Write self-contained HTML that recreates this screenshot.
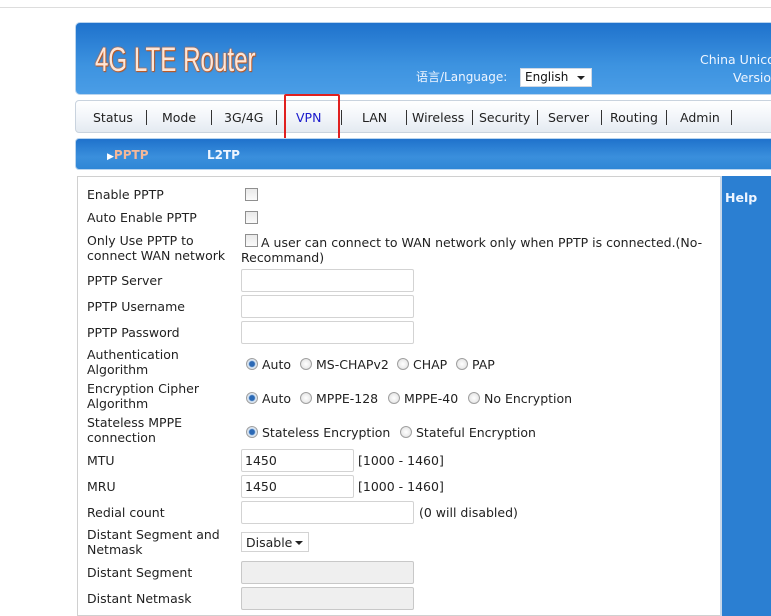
<!DOCTYPE html>
<html><head><meta charset="utf-8">
<style>
*{margin:0;padding:0;box-sizing:border-box}
body{width:771px;height:607px;overflow:hidden;background:#fff;position:relative;font-family:"DejaVu Sans","Liberation Sans","Noto Sans CJK SC",sans-serif;font-size:12px;color:#222}
.a{position:absolute;white-space:nowrap}
#topline{left:0;top:7px;width:771px;height:1px;background:#ddd}
#hdr{left:75px;top:22px;width:700px;height:73px;border-radius:5px;background:linear-gradient(#1f72cc,#3d93e0 60%,#4a9de6);border:1px solid #b9d4ee}
#logo{left:95px;top:41px;font-family:"Liberation Sans",sans-serif;font-size:34px;color:#fde6d8;transform:scaleX(0.71);transform-origin:left;text-shadow:0 0 2px #d9601e,0 0 2px #d9601e,1px 1px 1px #b04a10}
#lang{left:416px;top:68px;color:#eef5ff;font-size:12px}
#sel{left:520px;top:68px;width:72px;height:19px;background:#fff;border:1px solid #cfd8e4;font-size:12px;padding:1px 4px;color:#111}
#sel:after{content:"";position:absolute;right:6px;top:7px;border:4px solid transparent;border-top:4px solid #222}
#cu{left:700px;top:52px;color:#eef5ff;font-size:12.5px}
#ver{left:733px;top:70px;color:#eef5ff;font-size:12.5px}
#nav{left:75px;top:100px;width:700px;height:33px;border:1px solid #c9d3de;border-radius:4px;background:linear-gradient(#fff,#f3f6fa 50%,#e4eaf1)}
.n{top:110px;font-size:12.5px;color:#222}
.sep{top:110px;width:1px;height:15px;background:#333}
#vpnbox{left:284px;top:94px;width:56px;height:47px;border:2px solid #e02020;border-radius:2px}
#sub{left:75px;top:138px;width:700px;height:32px;border-radius:4px;background:linear-gradient(#1f72cc,#3a8fdc 60%,#2f86d6);border:1px solid #b9d4ee}
#content{left:77px;top:176px;width:644px;height:440px;border:1px solid #d0d0d0;border-right:none}
#help{left:720px;top:176px;width:51px;height:440px;background:#2b7fd2;border-left:2px solid #c8d8ea}
.l{left:87px;font-size:12.5px;line-height:15px}
.cb{width:13px;height:13px;border:1px solid #8f8f8f;background:linear-gradient(#e9e9e9,#fafafa)}
.in{left:241px;width:173px;height:23px;border:1px solid #d3d3d3;border-radius:2px;background:#fff;font-size:12.5px;padding:3px 3px}
.sm{width:113px}
.dis{background:#efefef;border-color:#c8c8c8}
.r{width:12px;height:12px;border-radius:50%;border:1px solid #a0a0a0;background:radial-gradient(#fff,#ddd)}
.r.on{background:radial-gradient(circle,#2b69b5 0,#2b69b5 2.5px,#cfe0f2 3.5px,#eee 6px)}
.t{font-size:12.5px}
</style></head><body>
<div class="a" id="topline"></div>
<div class="a" id="hdr"></div>
<div class="a" id="logo">4G LTE Router</div>
<div class="a" id="lang">语言/Language:</div>
<div class="a" id="sel">English</div>
<div class="a" id="cu">China Unicom</div>
<div class="a" id="ver">Version</div>

<div class="a" id="nav"></div>
<div class="a n" style="left:93px">Status</div>
<div class="a sep" style="left:146px"></div>
<div class="a n" style="left:162px">Mode</div>
<div class="a sep" style="left:211px"></div>
<div class="a n" style="left:224px">3G/4G</div>
<div class="a sep" style="left:276px"></div>
<div class="a n" style="left:296px;color:#1a1acc">VPN</div>
<div class="a sep" style="left:341px"></div>
<div class="a n" style="left:362px">LAN</div>
<div class="a sep" style="left:406px"></div>
<div class="a n" style="left:412px">Wireless</div>
<div class="a sep" style="left:472px"></div>
<div class="a n" style="left:479px">Security</div>
<div class="a sep" style="left:537px"></div>
<div class="a n" style="left:548px">Server</div>
<div class="a sep" style="left:601px"></div>
<div class="a n" style="left:610px">Routing</div>
<div class="a sep" style="left:666px"></div>
<div class="a n" style="left:680px">Admin</div>
<div class="a sep" style="left:731px"></div>
<div class="a" id="vpnbox"></div>

<div class="a" id="sub"></div>
<div class="a" style="left:107px;top:148px;font-weight:bold;color:#f4b89a;font-size:12px"><span style="color:#fff;font-size:9px">▶</span>PPTP</div>
<div class="a" style="left:207px;top:148px;font-weight:bold;color:#eef5ff;font-size:12px">L2TP</div>

<div class="a" id="content"></div>
<div class="a" id="help"></div>
<div class="a" style="left:725px;top:190px;font-weight:bold;color:#eef5ff;font-size:12.5px">Help</div>

<div class="a l" style="top:187px">Enable PPTP</div>
<div class="a cb" style="left:245px;top:188px"></div>
<div class="a l" style="top:210px">Auto Enable PPTP</div>
<div class="a cb" style="left:245px;top:211px"></div>
<div class="a l" style="top:233px">Only Use PPTP to<br>connect WAN network</div>
<div class="a cb" style="left:245px;top:234px"></div>
<div class="a t" style="left:261px;top:235px">A user can connect to WAN network only when PPTP is connected.(No-</div>
<div class="a t" style="left:241px;top:250px">Recommand)</div>

<div class="a l" style="top:273px">PPTP Server</div>
<div class="a in" style="top:269px"></div>
<div class="a l" style="top:299px">PPTP Username</div>
<div class="a in" style="top:295px"></div>
<div class="a l" style="top:325px">PPTP Password</div>
<div class="a in" style="top:321px"></div>

<div class="a l" style="top:347px">Authentication<br>Algorithm</div>
<div class="a r on" style="left:246px;top:358px"></div><div class="a t" style="left:262px;top:357px">Auto</div>
<div class="a r" style="left:300px;top:358px"></div><div class="a t" style="left:316px;top:357px">MS-CHAPv2</div>
<div class="a r" style="left:397px;top:358px"></div><div class="a t" style="left:413px;top:357px">CHAP</div>
<div class="a r" style="left:456px;top:358px"></div><div class="a t" style="left:472px;top:357px">PAP</div>

<div class="a l" style="top:381px">Encryption Cipher<br>Algorithm</div>
<div class="a r on" style="left:246px;top:392px"></div><div class="a t" style="left:262px;top:391px">Auto</div>
<div class="a r" style="left:300px;top:392px"></div><div class="a t" style="left:316px;top:391px">MPPE-128</div>
<div class="a r" style="left:388px;top:392px"></div><div class="a t" style="left:404px;top:391px">MPPE-40</div>
<div class="a r" style="left:468px;top:392px"></div><div class="a t" style="left:484px;top:391px">No Encryption</div>

<div class="a l" style="top:415px">Stateless MPPE<br>connection</div>
<div class="a r on" style="left:246px;top:426px"></div><div class="a t" style="left:262px;top:425px">Stateless Encryption</div>
<div class="a r" style="left:400px;top:426px"></div><div class="a t" style="left:416px;top:425px">Stateful Encryption</div>

<div class="a l" style="top:453px">MTU</div>
<div class="a in sm" style="top:449px">1450</div>
<div class="a t" style="left:358px;top:453px">[1000 - 1460]</div>
<div class="a l" style="top:479px">MRU</div>
<div class="a in sm" style="top:475px">1450</div>
<div class="a t" style="left:358px;top:479px">[1000 - 1460]</div>
<div class="a l" style="top:505px">Redial count</div>
<div class="a in" style="top:501px"></div>
<div class="a t" style="left:419px;top:505px">(0 will disabled)</div>

<div class="a l" style="top:527px">Distant Segment and<br>Netmask</div>
<div class="a" style="left:241px;top:532px;width:68px;height:20px;border:1px solid #d3d3d3;font-size:12.5px;padding:2px 4px">Disable<span style="position:absolute;right:5px;top:8px;border:4px solid transparent;border-top:4px solid #222"></span></div>
<div class="a l" style="top:565px">Distant Segment</div>
<div class="a in dis" style="top:561px"></div>
<div class="a l" style="top:591px">Distant Netmask</div>
<div class="a in dis" style="top:587px"></div>
</body></html>
